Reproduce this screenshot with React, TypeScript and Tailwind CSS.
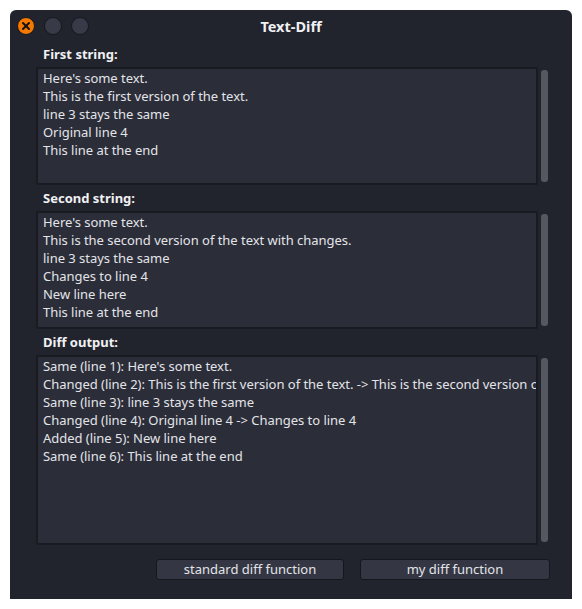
import { X } from 'lucide-react';

const FIRST = [
  "Here's some text.",
  'This is the first version of the text.',
  'line 3 stays the same',
  'Original line 4',
  'This line at the end',
];

const SECOND = [
  "Here's some text.",
  'This is the second version of the text with changes.',
  'line 3 stays the same',
  'Changes to line 4',
  'New line here',
  'This line at the end',
];

const OUTPUT = [
  "Same (line 1): Here's some text.",
  'Changed (line 2): This is the first version of the text. -> This is the second version of the text with changes.',
  'Same (line 3): line 3 stays the same',
  'Changed (line 4): Original line 4 -> Changes to line 4',
  'Added (line 5): New line here',
  'Same (line 6): This line at the end',
];

const TextPanel = ({ label, lines, height }: { label: string; lines: string[]; height: string }) => (
  <div>
    <div className="h-[26px] pl-[7px] pt-[4px] text-[13px] leading-[18px] font-bold text-[#f0f1f3]">{label}</div>
    <div className={`flex gap-[3px] ${height}`}>
      <div className="w-[502px] overflow-hidden rounded-[2px] border-2 border-[#191b21] bg-[#2b2d39] px-[5px] text-[13px] leading-[18px] tracking-[-0.03px] whitespace-nowrap text-[#e3e4e8]">
        {lines.map((line, i) => (
          <div key={i}>{line}</div>
        ))}
      </div>
      <div className="my-[3px] w-[7px] rounded-[3px] bg-[#555861]" />
    </div>
  </div>
);

const App = () => {
  return (
    <div className="h-[609px] w-[582px] bg-white px-[10px] pt-[10px] font-['Noto_Sans',sans-serif]">
      <div className="h-[589px] w-[562px] rounded-t-[6px] bg-[#22242d]">
        <div className="relative flex h-[31px] items-center pl-[7px]">
          <div className="flex gap-[9px]">
            <div className="flex h-[18px] w-[18px] items-center justify-center rounded-full border border-[#15171c] bg-[#f57900]">
              <X size={12} strokeWidth={4} className="text-[#15110d]" />
            </div>
            <div className="h-[18px] w-[18px] rounded-full border border-[#15171c] bg-[#383b47]" />
            <div className="h-[18px] w-[18px] rounded-full border border-[#15171c] bg-[#383b47]" />
          </div>
          <div className="absolute inset-x-0 top-[6px] text-center text-[14.5px] leading-[20px] font-bold text-[#f0f1f3]">Text-Diff</div>
        </div>
        <div className="pl-[26px]">
          <TextPanel label="First string:" lines={FIRST} height="h-[118px]" />
          <TextPanel label="Second string:" lines={SECOND} height="h-[118px]" />
          <TextPanel label="Diff output:" lines={OUTPUT} height="h-[190px]" />
          <div className="mt-[14px] flex gap-[16px] pl-[120px]">
            <button className="h-[21px] w-[188px] rounded-[3px] border border-[#15171c] bg-[#343743] pb-[2px] text-[13px] leading-[18px] text-[#e3e4e8]">
              standard diff function
            </button>
            <button className="h-[21px] w-[190px] rounded-[3px] border border-[#15171c] bg-[#343743] pb-[2px] text-[13px] leading-[18px] text-[#e3e4e8]">
              my diff function
            </button>
          </div>
        </div>
      </div>
    </div>
  );
};

export default App;
